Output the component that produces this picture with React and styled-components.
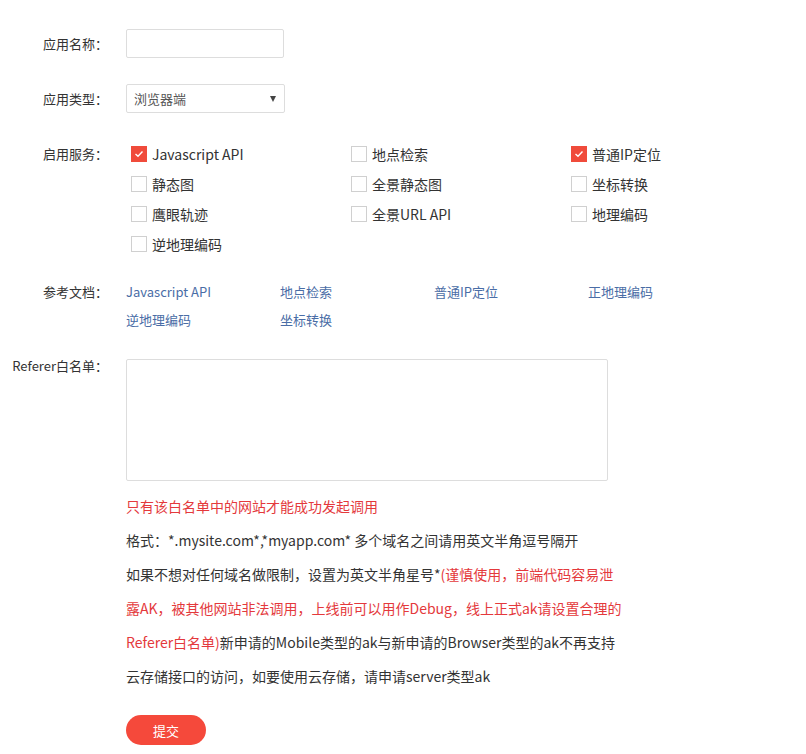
import React from "react";
import styled, { createGlobalStyle } from "styled-components";

const Global = createGlobalStyle`
  html, body { margin: 0; padding: 0; background: #fff; }
  body { font-family: "Microsoft YaHei", "Noto Sans CJK SC", "Noto Sans", sans-serif; color: #333; }
  * { box-sizing: border-box; }
`;

const Form = styled.form`
  display: flex;
  flex-direction: column;
  padding: 29px 0 0 0;
  width: 806px;
`;

const Row = styled.div`
  display: grid;
  grid-template-columns: 108px 1fr;
  column-gap: 18px;
  align-items: start;
  margin-bottom: ${(p) => p.$mb || 0}px;
`;

const Label = styled.div`
  font-size: 13px;
  line-height: ${(p) => p.$lh || 29}px;
  text-align: right;
  color: #333;
  white-space: nowrap;
`;

const TextInput = styled.input`
  width: 158px;
  height: 29px;
  border: 1px solid #ddd;
  border-radius: 2px;
  padding: 0 8px;
  font: inherit;
  outline: none;
`;

const SelectBox = styled.div`
  width: 159px;
  height: 29px;
  border: 1px solid #ddd;
  border-radius: 2px;
  display: flex;
  align-items: center;
  padding: 0 7px;
  font-size: 13px;
  color: #555;
`;

const Caret = styled.span`
  margin-left: auto;
  width: 0;
  height: 0;
  border-left: 3.5px solid transparent;
  border-right: 3.5px solid transparent;
  border-top: 6px solid #444;
  margin-right: 1px;
`;

const CheckGrid = styled.div`
  display: grid;
  grid-template-columns: repeat(3, 220px);
  grid-auto-rows: 30px;
  padding-left: 5px;
  margin-top: -7px;
`;

const CheckItem = styled.label`
  display: flex;
  align-items: center;
  gap: 5px;
  font-size: 14px;
  color: #333;
  height: 30px;
  white-space: nowrap;
`;

const Box = styled.span`
  width: 16px;
  height: 16px;
  border: 1px solid ${(p) => (p.$checked ? "#f04b3b" : "#d0d0d0")};
  background: ${(p) => (p.$checked ? "#f04b3b" : "#fff")};
  display: inline-flex;
  align-items: center;
  justify-content: center;
  flex: none;
`;

const LinkGrid = styled.div`
  display: grid;
  grid-template-columns: repeat(4, 154px);
  grid-auto-rows: 28px;
  margin-top: -7px;
`;

const DocLink = styled.a`
  font-size: 13px;
  color: #4a6da6;
  text-decoration: none;
  line-height: 28px;
  white-space: nowrap;
`;

const TextArea = styled.textarea`
  display: block;
  width: 482px;
  height: 122px;
  border: 1px solid #ddd;
  border-radius: 2px;
  resize: none;
  font: inherit;
  outline: none;
`;

const Notes = styled.div`
  width: 499px;
  font-size: 14px;
  line-height: 34px;
  color: #333;
  margin-top: 8px;
`;

const Warn = styled.span`
  color: #e4393c;
`;

const Line = styled.p`
  margin: 0;
`;

const SubmitButton = styled.button`
  display: block;
  width: 80px;
  height: 30px;
  border: none;
  border-radius: 15px;
  background: #f5493b;
  color: #fff;
  font: inherit;
  font-size: 13px;
  margin-top: 22px;
  cursor: pointer;
`;

const Check = () => (
  <svg width="10" height="8" viewBox="0 0 10 8">
    <path d="M1.5 4 L4 6.3 L8.5 1.5" fill="none" stroke="#fff" strokeWidth="1.4" />
  </svg>
);

const services = [
  ["Javascript API", true],
  ["地点检索", false],
  ["普通IP定位", true],
  ["静态图", false],
  ["全景静态图", false],
  ["坐标转换", false],
  ["鹰眼轨迹", false],
  ["全景URL API", false],
  ["地理编码", false],
  ["逆地理编码", false],
];

const docs = ["Javascript API", "地点检索", "普通IP定位", "正地理编码", "逆地理编码", "坐标转换"];

export default function App() {
  return (
    <>
      <Global />
      <Form onSubmit={(e) => e.preventDefault()}>
        <Row $mb={26}>
          <Label>应用名称：</Label>
          <div>
            <TextInput />
          </div>
        </Row>
        <Row $mb={33}>
          <Label>应用类型：</Label>
          <div>
            <SelectBox>
              浏览器端
              <Caret />
            </SelectBox>
          </div>
        </Row>
        <Row $mb={26}>
          <Label $lh={16}>启用服务：</Label>
          <CheckGrid>
            {services.map(([name, on]) => (
              <CheckItem key={name}>
                <Box $checked={on}>{on && <Check />}</Box>
                {name}
              </CheckItem>
            ))}
          </CheckGrid>
        </Row>
        <Row $mb={25}>
          <Label $lh={14}>参考文档：</Label>
          <LinkGrid>
            {docs.map((d) => (
              <DocLink key={d} href="#">
                {d}
              </DocLink>
            ))}
          </LinkGrid>
        </Row>
        <Row>
          <Label $lh={14}>Referer白名单：</Label>
          <div>
            <TextArea />
            <Notes>
              <Line>
                <Warn>只有该白名单中的网站才能成功发起调用</Warn>
              </Line>
              <Line>格式：*.mysite.com*,*myapp.com* 多个域名之间请用英文半角逗号隔开</Line>
              <Line>
                如果不想对任何域名做限制，设置为英文半角星号*
                <Warn>(谨慎使用，前端代码容易泄露AK，被其他网站非法调用，上线前可以用作Debug，线上正式ak请设置合理的Referer白名单)</Warn>
                新申请的Mobile类型的ak与新申请的Browser类型的ak不再支持云存储接口的访问，如要使用云存储，请申请server类型ak
              </Line>
            </Notes>
            <SubmitButton type="submit">提交</SubmitButton>
          </div>
        </Row>
      </Form>
    </>
  );
}
